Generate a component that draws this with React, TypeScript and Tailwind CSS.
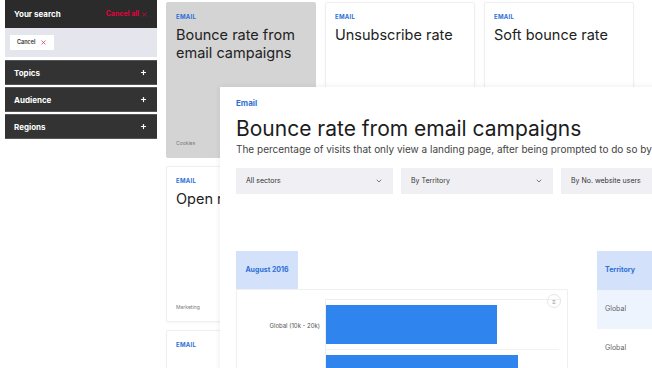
import { ChevronDown, Plus, X } from "lucide-react";

const font = { fontFamily: "Inter, 'Open Sans', sans-serif" };

const cards = [
  { title: "Bounce rate from email campaigns", foot: "Cookies", active: true },
  { title: "Unsubscribe rate", foot: "" },
  { title: "Soft bounce rate", foot: "" },
  { title: "Open rate", foot: "Marketing" },
  { title: "", foot: "" },
  { title: "", foot: "" },
  { title: "", foot: "" }
];

const filters = ["Topics", "Audience", "Regions"];

function Card({ title, foot, active }: { title: string; foot: string; active?: boolean }) {
  return (
    <div
      className={`flex h-[156px] flex-col rounded-[2px] border px-[9px] pt-[9px] pb-[10px] ${
        active ? "border-[#d4d4d4] bg-[#d4d4d4]" : "border-[#efefef] bg-white shadow-[0_1px_3px_rgba(0,0,0,0.04)]"
      }`}
    >
      <p className="text-[6px] font-bold uppercase tracking-[0.3px] text-[#2d6fd8]">Email</p>
      <h3 className="mt-[5px] text-[14.5px] leading-[18px] text-[#222]">{title}</h3>
      <p className="mt-auto text-[5px] text-[#777]">{foot}</p>
    </div>
  );
}

// Écran de résultats avec la fenêtre de détail ouverte par-dessus la grille.
export default function App() {
  return (
    <div className="relative h-[368px] w-[652px] overflow-hidden bg-white" style={font}>
      <div className="flex items-start">
        <aside className="ml-[5px] w-[152px] shrink-0">
          <div className="flex h-[28px] items-center justify-between bg-[#2b2b2b] px-[9px]">
            <span className="text-[8px] font-bold text-white">Your search</span>
            <span className="flex items-center gap-[2px] text-[7px] font-bold text-[#e4003b]">
              Cancel all <X size={7} strokeWidth={3} />
            </span>
          </div>
          <div className="flex h-[29px] items-center bg-[#e5e5ee] px-[5px]">
            <span className="flex h-[15px] items-center gap-[5px] rounded-[1px] bg-white px-[7px] text-[5.5px] font-semibold text-[#333]">
              Cancel <X size={7} strokeWidth={2} className="text-[#e4003b]" />
            </span>
          </div>
          <div className="mt-[3px] flex flex-col gap-[2px] bg-white">
            {filters.map((f) => (
              <div
                key={f}
                className="flex h-[25px] items-center justify-between border-y border-[#555] bg-[#333] pl-[9px] pr-[10px]"
              >
                <span className="text-[8px] font-bold text-white">{f}</span>
                <Plus size={7} strokeWidth={4} className="text-white" />
              </div>
            ))}
          </div>
        </aside>

        <main className="ml-[9px] grid flex-1 grid-cols-[150px_150px_150px] gap-x-[9px] gap-y-[8px] pt-[2px]">
          {cards.map((c, i) => (
            <Card key={i} {...c} />
          ))}
        </main>
      </div>

      <section className="absolute top-[87px] left-[220px] h-[300px] w-[480px] bg-white pl-[16px] pt-[10px] shadow-[0_0_6px_rgba(0,0,0,0.08)]">
        <p className="text-[8px] font-bold text-[#2d6fd8]">Email</p>
        <h2 className="mt-[7px] text-[21px] leading-[25px] whitespace-nowrap text-[#1c1c1c]">
          Bounce rate from email campaigns
        </h2>
        <p className="mt-[1px] text-[10px] whitespace-nowrap text-[#444]">
          The percentage of visits that only view a landing page, after being prompted to do so by email
        </p>

        <div className="mt-[11px] flex gap-[8px]">
          {["All sectors", "By Territory", "By No. website users"].map((d, i) => (
            <div
              key={d}
              className={`flex h-[26px] shrink-0 items-center justify-between bg-[#f0f0f4] px-[10px] text-[7px] text-[#333] ${
                i === 0 ? "w-[157px]" : "w-[152px]"
              }`}
            >
              {d}
              <ChevronDown size={8} strokeWidth={2.5} className="text-[#666]" />
            </div>
          ))}
        </div>

        <div className="mt-[57px] flex items-start">
          <div className="w-[332px] shrink-0">
            <div className="flex h-[38px] w-[62px] items-center justify-center bg-[#d3e2fa] text-[7px] font-bold text-[#2d6fd8]">
              August 2016
            </div>
            <div className="relative h-[100px] border border-[#f0f0f0] pt-[9px]">
              <div className="absolute top-[4px] right-[6px] flex h-[14px] w-[14px] items-center justify-center rounded-full border border-[#e5e5e5] text-[6px] text-[#888]">
                ≡
              </div>
              <div className="ml-[88px] mr-[8px] border-t border-l border-[#eeeeee]">
                <div className="flex items-center">
                  <div className="relative mt-[5px] h-[39px] w-[171px] bg-[#2f84ee]">
                    <span className="absolute top-1/2 right-[177px] -translate-y-1/2 whitespace-nowrap text-[6px] text-[#555]">
                      Global (10k - 20k)
                    </span>
                  </div>
                </div>
                <div className="mt-[5px] border-t border-[#f2f2f2] pt-[5px]">
                  <div className="h-[39px] w-[192px] bg-[#2f84ee]" />
                </div>
              </div>
            </div>
          </div>

          <div className="ml-[29px] w-[120px] shrink-0 text-[7px]">
            <div className="flex h-[39px] items-center bg-[#d3e2fa] px-[8px] font-bold text-[#2d6fd8]">Territory</div>
            <div className="flex h-[39px] items-center bg-[#eef4fd] px-[8px] text-[#666]">Global</div>
            <div className="flex h-[39px] items-center bg-white px-[8px] text-[#666]">Global</div>
          </div>
        </div>
      </section>
    </div>
  );
}
